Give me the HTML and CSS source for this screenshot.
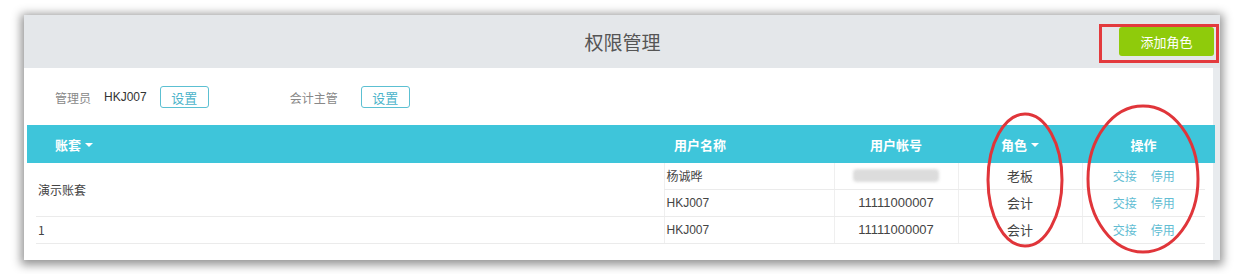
FILE: index.html
```html
<!DOCTYPE html>
<html lang="zh">
<head>
<meta charset="utf-8">
<link rel="stylesheet" href="styles.css">
</head>
<body>
<div class="page">
  <div class="panel">
    <div class="topbar">
      <div></div>
      <div class="title">权限管理</div>
      <div class="actions"><button class="btn-add">添加角色</button></div>
    </div>
    <div class="info">
      <span class="label">管理员</span>
      <span class="value">HKJ007</span>
      <button class="btn-set">设置</button>
      <span class="label label-2">会计主管</span>
      <button class="btn-set">设置</button>
    </div>
    <div class="grid-wrap">
      <div class="thead">
        <div class="th th-left">账套 <span class="caret"></span></div>
        <div class="th">用户名称</div>
        <div class="th">用户帐号</div>
        <div class="th">角色 <span class="caret"></span></div>
        <div class="th">操作</div>
        <div></div>
      </div>
      <table class="tbody">
        <colgroup>
          <col class="c1"><col class="c2"><col class="c3"><col class="c4"><col class="c5">
        </colgroup>
        <tr>
          <td class="set" rowspan="2">演示账套</td>
          <td class="name">杨诚晔</td>
          <td class="ctr"><div class="blur"></div></td>
          <td class="ctr">老板</td>
          <td class="ctr ops"><a>交接</a><a>停用</a></td>
        </tr>
        <tr>
          <td class="name">HKJ007</td>
          <td class="ctr">11111000007</td>
          <td class="ctr">会计</td>
          <td class="ctr ops"><a>交接</a><a>停用</a></td>
        </tr>
        <tr>
          <td class="set">1</td>
          <td class="name">HKJ007</td>
          <td class="ctr">11111000007</td>
          <td class="ctr">会计</td>
          <td class="ctr ops"><a>交接</a><a>停用</a></td>
        </tr>
      </table>
    </div>
  </div>
  <svg class="marks" width="1247" height="274" viewBox="0 0 1247 274">
    <rect x="1100.5" y="25.5" width="117" height="36" fill="none" stroke="#e33a3d" stroke-width="3"/>
    <ellipse cx="1025" cy="180" rx="37" ry="66" fill="none" stroke="#e0353a" stroke-width="3"/>
    <ellipse cx="1143" cy="179" rx="55" ry="73" fill="none" stroke="#e0353a" stroke-width="3"/>
  </svg>
</div>
</body>
</html>
```

FILE: styles.css
```css
* { box-sizing: border-box; }
html, body { margin: 0; padding: 0; background: #fff; }
body {
  font-family: "Liberation Sans", "Noto Sans CJK SC", sans-serif;
  font-size: 12px;
  color: #333;
}
.page {
  position: relative;
  width: 1247px;
  height: 274px;
  padding: 15px 0 0 24px;
}
.panel {
  width: 1196px;
  height: 245px;
  background: #fff;
  box-shadow: 0 2px 9px 3px rgba(0,0,0,0.42);
  border-right: 7px solid #e8ebee;
}
.topbar {
  height: 53px;
  background: #e4e7ea;
  display: grid;
  grid-template-columns: 1fr auto 1fr;
  align-items: center;
  margin-right: -7px;
}
.title {
  font-family: "Noto Sans CJK SC", sans-serif;
  font-size: 19px;
  color: #555;
  padding-left: 1px;
}
.actions { display: flex; justify-content: flex-end; padding-right: 6px; }
.btn-add {
  width: 95px;
  height: 29px;
  border: none;
  border-radius: 3px;
  background: #8fcb0b;
  color: #fff;
  font-family: "Noto Sans CJK SC", sans-serif;
  font-size: 13px;
}
.info {
  height: 57px;
  display: flex;
  align-items: center;
  padding-left: 31px;
  padding-top: 1px;
  font-family: "Noto Sans CJK SC", sans-serif;
}
.label { color: #888; font-size: 12px; }
.label-2 { margin-left: 81px; }
.value { color: #333; font-size: 12px; margin-left: 13px; font-family: "Liberation Sans", sans-serif; }
.btn-set {
  width: 49px;
  height: 22px;
  margin-left: 13px;
  border: 1px solid #5cc0d2;
  border-radius: 3px;
  background: #fff;
  color: #4cb4ca;
  font-family: "Noto Sans CJK SC", sans-serif;
  font-size: 13px;
  padding: 0;
}
.label-2 + .btn-set { margin-left: 23px; }
.grid-wrap { padding-left: 3px; }
.thead {
  height: 38px;
  width: 1188px;
  background: #3ec5da;
  display: grid;
  grid-template-columns: 539px 268px 124px 124px 123px 10px;
  align-items: center;
  color: #fff;
  font-weight: bold;
  font-size: 13px;
  font-family: "Noto Sans CJK SC", sans-serif;
}
.th { text-align: center; }
.th-left { text-align: left; padding-left: 28px; }
.caret {
  display: inline-block;
  width: 0; height: 0;
  border-left: 4px solid transparent;
  border-right: 4px solid transparent;
  border-top: 4px solid #fff;
  vertical-align: middle;
  margin-left: 1px;
  margin-top: -2px;
}
.tbody {
  margin-left: 9px;
  width: 1169px;
  border-collapse: collapse;
  table-layout: fixed;
  font-family: "Noto Sans CJK SC", sans-serif;
}
.c1 { width: 628px; } .c2 { width: 170px; } .c3 { width: 124px; } .c4 { width: 124px; } .c5 { width: 123px; }
.tbody td {
  height: 27px;
  padding: 0;
  border-bottom: 1px solid #ebebeb;
  border-left: 1px solid #efefef;
  font-size: 12px;
  color: #444;
  vertical-align: middle;
  white-space: nowrap;
}
.tbody td.set { border-left: none; padding-left: 2px; }
.tbody td.name { padding-left: 2px; font-family: "Liberation Sans", "Noto Sans CJK SC", sans-serif; }
.tbody td.ctr { text-align: center; font-family: "Liberation Sans", "Noto Sans CJK SC", sans-serif; font-size: 13px; }
.tbody tr:first-child td { height: 26px; }
.blur {
  width: 86px;
  height: 13px;
  margin: 0 auto;
  background: #dcdcdc;
  border-radius: 4px;
  filter: blur(1.5px);
}
.ops a {
  color: #62bdd3;
  font-family: "Noto Sans CJK SC", sans-serif;
  font-size: 12px;
  margin: 0 7px;
}
.marks { position: absolute; left: 0; top: 0; pointer-events: none; }
```
